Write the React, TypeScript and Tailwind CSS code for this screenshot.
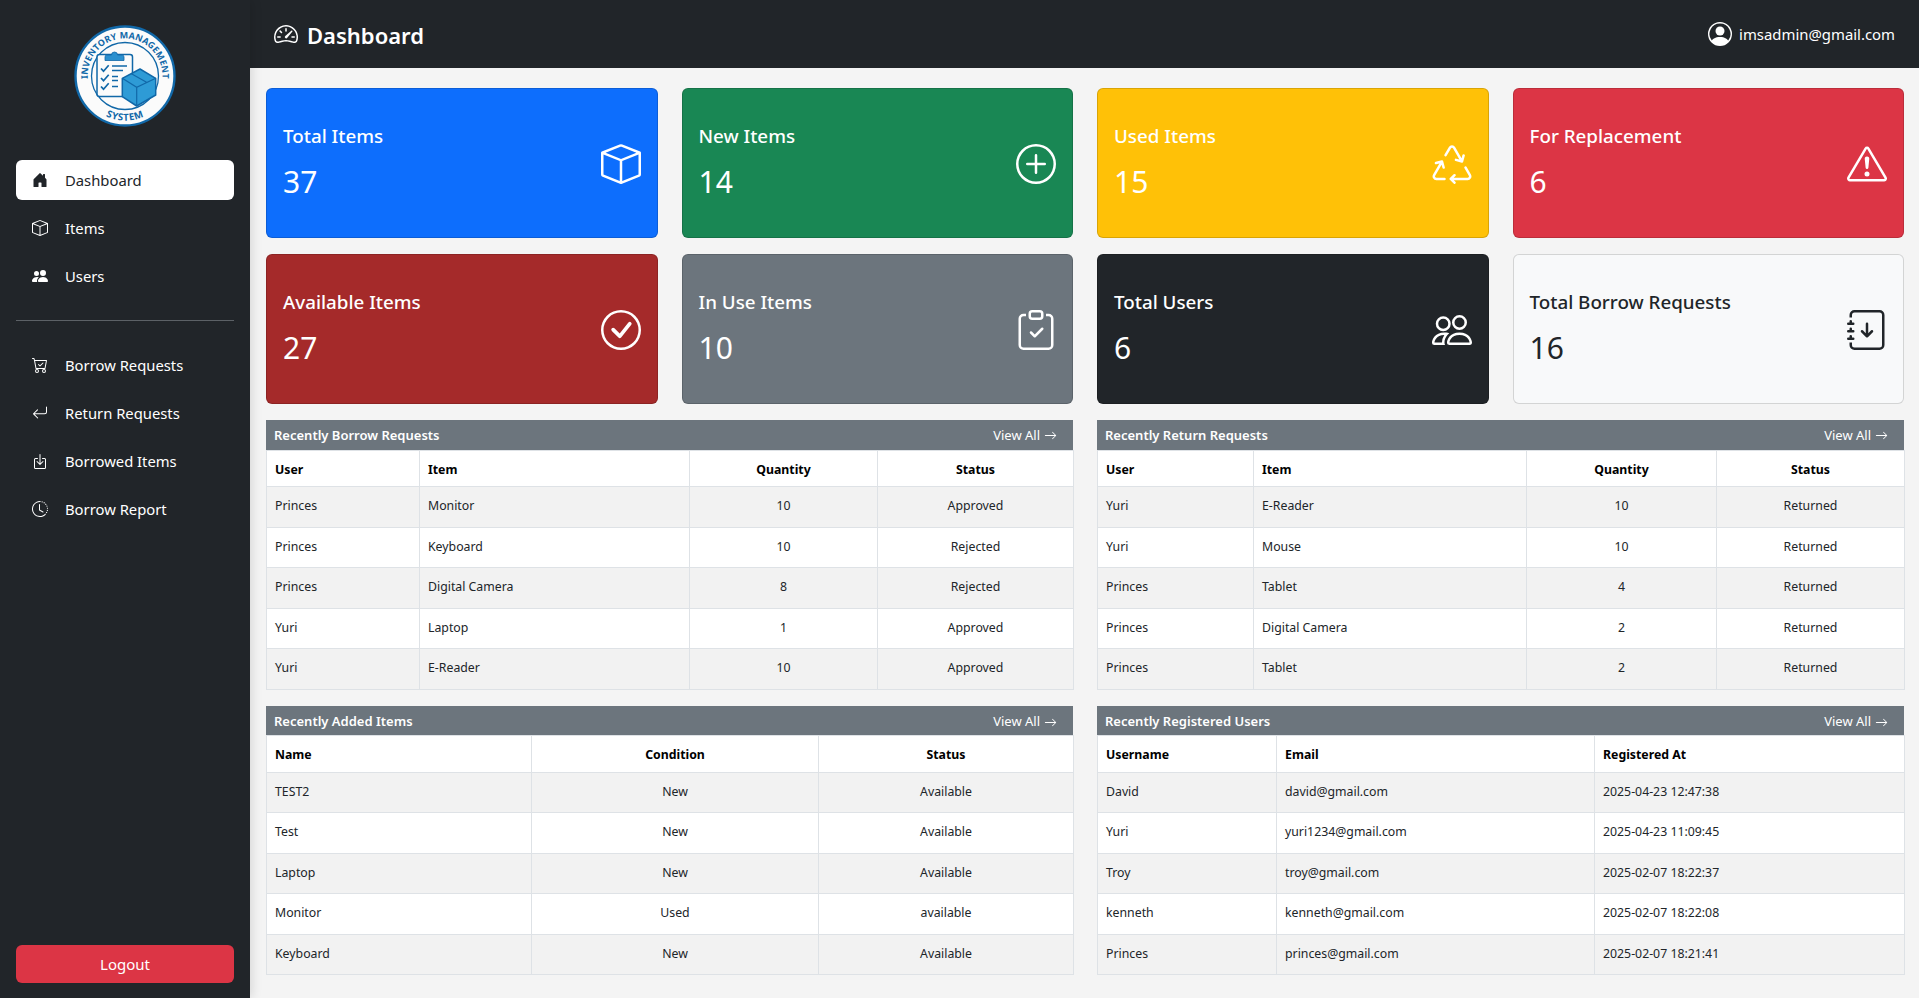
import React from "react";
import type { IconType } from "react-icons";
import {
  BsArrowRight,
  BsArrowReturnLeft,
  BsBox,
  BsBoxArrowInDown,
  BsCartCheck,
  BsCheckCircle,
  BsClipboardCheck,
  BsClockHistory,
  BsExclamationTriangle,
  BsHouseDoorFill,
  BsJournalArrowDown,
  BsPeople,
  BsPeopleFill,
  BsPersonCircle,
  BsPlusCircle,
  BsRecycle,
  BsSpeedometer2,
} from "react-icons/bs";

function Logo() {
  return (
    <svg viewBox="-51 -51 102 102" className="w-[102px] h-[102px]">
      <circle cx="0" cy="0" r="49.5" fill="#fbfbfb" stroke="#1168a8" strokeWidth="2.4" />
      <circle cx="0" cy="0" r="33.5" fill="none" stroke="#1168a8" strokeWidth="1.3" />
      <defs>
        <path id="logoTop" d="M -36 10 A 37.4 37.4 0 1 1 36 10" />
        <path id="logoBottom" d="M -33 30 A 44.6 44.6 0 0 0 33 30" />
      </defs>
      <text fill="#1168a8" fontSize="9" fontWeight="700" letterSpacing="0.1" fontFamily="'Noto Sans', sans-serif">
        <textPath href="#logoTop" startOffset="50%" textAnchor="middle">INVENTORY MANAGEMENT</textPath>
      </text>
      <text fill="#1168a8" fontSize="9.6" fontWeight="700" letterSpacing="0.5" fontFamily="'Noto Sans', sans-serif">
        <textPath href="#logoBottom" startOffset="50%" textAnchor="middle">SYSTEM</textPath>
      </text>
      <rect x="-28" y="-21.5" width="35.5" height="42" rx="2.5" fill="#fbfbfb" stroke="#1168a8" strokeWidth="1.5" />
      <path d="M-20 -15.5 V-19 a2 2 0 0 1 2 -2 h4.5 a3 3 0 0 1 6 0 h4.5 a2 2 0 0 1 2 2 v3.5 z" fill="#2b90cf" stroke="#1168a8" strokeWidth="0.8" />
      <g fill="none" stroke="#1168a8" strokeWidth="1.7">
        <path d="M-24 -7.5 l2.5 2.7 l5.2 -6" />
        <path d="M-24 2 l2.5 2.7 l5.2 -6" />
        <path d="M-24 10.5 l2.5 2.7 l5.2 -6" />
        <path d="M-13 -10 h15 M-13 -5.5 h11 M-13 0.5 h6 M-13 4.5 h6 M-13 10.5 h6" strokeWidth="1.4" />
      </g>
      <path d="M-2.7 2.3 L15 -7 L30.7 2.3 L30.7 19 L11.7 30 L-2.7 20.7 Z" fill="#2e9bd6" stroke="#1168a8" strokeWidth="1.5" strokeLinejoin="round" />
      <path d="M-2.7 2.3 L11.7 11.3 L30.7 2.3 M11.7 11.3 V30 M6 -2.5 L21.5 6.3" fill="none" stroke="#1168a8" strokeWidth="1.2" />
    </svg>
  );
}

const navTop: [IconType, string][] = [
  [BsHouseDoorFill, "Dashboard"],
  [BsBox, "Items"],
  [BsPeopleFill, "Users"],
];
const navBottom: [IconType, string][] = [
  [BsCartCheck, "Borrow Requests"],
  [BsArrowReturnLeft, "Return Requests"],
  [BsBoxArrowInDown, "Borrowed Items"],
  [BsClockHistory, "Borrow Report"],
];

function NavItem({ icon: Icon, label, active }: { icon: IconType; label: string; active?: boolean }) {
  return (
    <a className={`flex items-center h-10 mb-2 pl-4 rounded-md text-[14.8px] ${active ? "bg-white text-[#212529]" : "text-white"}`}>
      <Icon className="w-4 h-4 mr-[17px]" />
      <span>{label}</span>
    </a>
  );
}

const cards: { title: string; value: number; icon: IconType; cls: string }[] = [
  { title: "Total Items", value: 37, icon: BsBox, cls: "bg-[#0d6efd] text-white" },
  { title: "New Items", value: 14, icon: BsPlusCircle, cls: "bg-[#198754] text-white" },
  { title: "Used Items", value: 15, icon: BsRecycle, cls: "bg-[#ffc107] text-white" },
  { title: "For Replacement", value: 6, icon: BsExclamationTriangle, cls: "bg-[#dc3545] text-white" },
  { title: "Available Items", value: 27, icon: BsCheckCircle, cls: "bg-[#a52a2a] text-white" },
  { title: "In Use Items", value: 10, icon: BsClipboardCheck, cls: "bg-[#6c757d] text-white" },
  { title: "Total Users", value: 6, icon: BsPeople, cls: "bg-[#212529] text-white" },
  { title: "Total Borrow Requests", value: 16, icon: BsJournalArrowDown, cls: "bg-[#f8f9fa] text-[#212529]" },
];

type Col = { name: string; width: string; center?: boolean };

function DataTable({ title, cols, rows, heights, headCls, theadH, thCls }: { title: string; cols: Col[]; rows: string[][]; heights: number[]; headCls: string; theadH: number; thCls: string }) {
  return (
    <section>
      <div className={`flex items-center justify-between pl-2 pr-4 bg-[#6c757d] text-white text-[13px] ${headCls}`}>
        <span className="font-semibold">{title}</span>
        <a className="flex items-center gap-1">
          View All <BsArrowRight className="w-[13px] h-[13px]" />
        </a>
      </div>
      <table className="w-full table-fixed border-collapse text-[12.3px] text-[#212529]">
        <colgroup>
          {cols.map((c) => (
            <col key={c.name} style={{ width: c.width }} />
          ))}
        </colgroup>
        <thead>
          <tr className="bg-white" style={{ height: theadH }}>
            {cols.map((c) => (
              <th key={c.name} className={`border border-[#dee2e6] px-2 font-bold text-black ${thCls} ${c.center ? "text-center" : "text-left"}`}>
                {c.name}
              </th>
            ))}
          </tr>
        </thead>
        <tbody>
          {rows.map((r, i) => (
            <tr key={i} className={i % 2 === 0 ? "bg-[#f2f2f2]" : "bg-white"} style={{ height: heights[i] }}>
              {r.map((v, j) => (
                <td key={j} className={`border border-[#dee2e6] px-2 pt-[9px] leading-5 align-top ${cols[j].center ? "text-center" : "text-left"}`}>
                  {v}
                </td>
              ))}
            </tr>
          ))}
        </tbody>
      </table>
    </section>
  );
}

const h1 = [41, 40, 41, 40, 41];
const h2 = [40, 41, 40, 41, 40];

export default function App() {
  return (
    <div className="flex h-[998px] overflow-hidden bg-[#f4f4f4] font-['Noto_Sans',sans-serif]">
      <aside className="relative z-10 w-[250px] shrink-0 flex flex-col bg-[#212529] px-4 pb-[15px] shadow-[2px_0_10px_rgba(0,0,0,0.12)]">
        <div className="flex justify-center pt-[25px] pb-[33px]">
          <Logo />
        </div>
        <nav>
          {navTop.map(([icon, label], i) => (
            <NavItem key={label} icon={icon} label={label} active={i === 0} />
          ))}
        </nav>
        <hr className="mt-4 mb-6 border-t border-[#5c6166]" />
        <nav>
          {navBottom.map(([icon, label]) => (
            <NavItem key={label} icon={icon} label={label} />
          ))}
        </nav>
        <button className="mt-auto h-[38px] rounded-md bg-[#dc3545] text-white text-[15px]">Logout</button>
      </aside>
      <div className="flex-1 min-w-0 flex flex-col">
        <header className="h-[68px] shrink-0 flex items-center justify-between px-6 bg-[#212529] text-white">
          <div className="flex items-center gap-[9px]">
            <BsSpeedometer2 className="w-6 h-6" />
            <h1 className="text-[22px] font-semibold pt-[2px]">Dashboard</h1>
          </div>
          <div className="flex items-center gap-[7px]">
            <BsPersonCircle className="w-6 h-6" />
            <span className="text-[14.9px]">imsadmin@gmail.com</span>
          </div>
        </header>
        <main className="flex-1 pl-4 pr-[15px] pt-5 flex flex-col gap-4">
          <div className="grid grid-cols-4 gap-x-6 gap-y-4">
            {cards.map((c) => {
              const Icon = c.icon;
              return (
                <div key={c.title} className={`h-[150px] rounded-md border border-black/15 flex items-center justify-between px-4 ${c.cls}`}>
                  <div className="pb-[2px]">
                    <div className="text-[18.8px] font-medium leading-6 mb-[15px]">{c.title}</div>
                    <div className="text-[30px] leading-[38px]">{c.value}</div>
                  </div>
                  <Icon className="w-10 h-10 mt-px" />
                </div>
              );
            })}
          </div>
          <div className="grid grid-cols-2 gap-x-6 gap-y-4">
            <DataTable
              title="Recently Borrow Requests"
              headCls="h-[30px] pt-px"
              theadH={36}
              thCls="pt-1"
              heights={h1}
              cols={[
                { name: "User", width: "153px" },
                { name: "Item", width: "270px" },
                { name: "Quantity", width: "188px", center: true },
                { name: "Status", width: "196px", center: true },
              ]}
              rows={[
                ["Princes", "Monitor", "10", "Approved"],
                ["Princes", "Keyboard", "10", "Rejected"],
                ["Princes", "Digital Camera", "8", "Rejected"],
                ["Yuri", "Laptop", "1", "Approved"],
                ["Yuri", "E-Reader", "10", "Approved"],
              ]}
            />
            <DataTable
              title="Recently Return Requests"
              headCls="h-[30px] pt-px"
              theadH={36}
              thCls="pt-1"
              heights={h1}
              cols={[
                { name: "User", width: "156px" },
                { name: "Item", width: "273px" },
                { name: "Quantity", width: "190px", center: true },
                { name: "Status", width: "188px", center: true },
              ]}
              rows={[
                ["Yuri", "E-Reader", "10", "Returned"],
                ["Yuri", "Mouse", "10", "Returned"],
                ["Princes", "Tablet", "4", "Returned"],
                ["Princes", "Digital Camera", "2", "Returned"],
                ["Princes", "Tablet", "2", "Returned"],
              ]}
            />
            <DataTable
              title="Recently Added Items"
              headCls="h-[29px] pt-[3px]"
              theadH={37}
              thCls="pt-[2px]"
              heights={h2}
              cols={[
                { name: "Name", width: "265px" },
                { name: "Condition", width: "287px", center: true },
                { name: "Status", width: "255px", center: true },
              ]}
              rows={[
                ["TEST2", "New", "Available"],
                ["Test", "New", "Available"],
                ["Laptop", "New", "Available"],
                ["Monitor", "Used", "available"],
                ["Keyboard", "New", "Available"],
              ]}
            />
            <DataTable
              title="Recently Registered Users"
              headCls="h-[29px] pt-[3px]"
              theadH={37}
              thCls="pt-[2px]"
              heights={h2}
              cols={[
                { name: "Username", width: "179px" },
                { name: "Email", width: "318px" },
                { name: "Registered At", width: "310px" },
              ]}
              rows={[
                ["David", "david@gmail.com", "2025-04-23 12:47:38"],
                ["Yuri", "yuri1234@gmail.com", "2025-04-23 11:09:45"],
                ["Troy", "troy@gmail.com", "2025-02-07 18:22:37"],
                ["kenneth", "kenneth@gmail.com", "2025-02-07 18:22:08"],
                ["Princes", "princes@gmail.com", "2025-02-07 18:21:41"],
              ]}
            />
          </div>
        </main>
      </div>
    </div>
  );
}
